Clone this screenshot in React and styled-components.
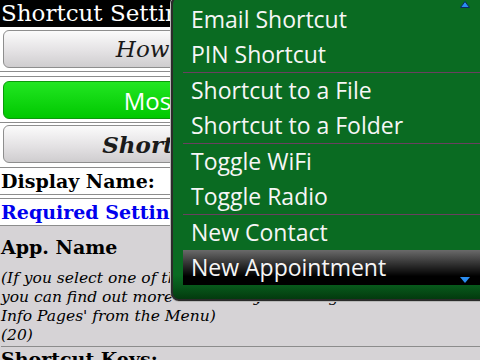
import React from 'react'
import styled, { createGlobalStyle } from 'styled-components';

const GlobalStyle = createGlobalStyle`
  html, body {
    margin: 0;
    padding: 0;
    background: #d6d3d6;
  }
`;

const Screen = styled.div`
  position: relative;
  width: 480px;
  height: 360px;
  overflow: hidden;
  background: #d6d3d6;
  font-family: "DejaVu Serif", serif;
`;

const TitleBar = styled.div`
  height: 27px;
  line-height: 27px;
  background: #000;
  color: #fff;
  font-size: 23px;
  padding-left: 1px;
  white-space: nowrap;
`;

const Upper = styled.div`
  background: #fff;
`;

const Block = styled.div`
  padding: ${({ $pad }) => $pad || '3px 3px 3px'};
  border-top: ${({ $ruleTop }) => ($ruleTop ? '1px solid #8c8c8c' : 'none')};
  border-bottom: 1px solid #8c8c8c;
  margin-top: ${({ $gap }) => $gap || 0};
`;

const Button = styled.div`
  height: 36px;
  border-radius: 6px;
  display: flex;
  align-items: center;
  justify-content: center;
  white-space: nowrap;
  overflow: hidden;
  border: 1px solid ${({ $green }) => ($green ? '#0a9a0a' : '#8e8e8e')};
  background: ${({ $green }) =>
    $green
      ? 'linear-gradient(#22e622, #00c800)'
      : 'linear-gradient(#fbfbfb, #e4e2e4 55%, #cfcdcf)'};
  color: ${({ $green }) => ($green ? '#fff' : '#1a1a1a')};
  font-family: ${({ $green }) => ($green ? '"Open Sans", sans-serif' : '"DejaVu Serif", serif')};
  font-size: ${({ $green }) => ($green ? '24px' : '23px')};
  font-style: ${({ $green }) => ($green ? 'normal' : 'italic')};
  font-weight: ${({ $bold }) => ($bold ? 700 : 400)};
`;

const Label = styled.div`
  font-weight: 700;
  font-size: 19px;
  color: ${({ $blue }) => ($blue ? '#0000ee' : '#000')};
  padding: 0 0 0 1px;
  height: 26px;
  line-height: 26px;
  white-space: nowrap;
  border-bottom: 1px solid #8c8c8c;
  border-top: ${({ $ruleTop }) => ($ruleTop ? '1px solid #8c8c8c' : 'none')};
  margin-top: ${({ $gap }) => $gap || 0};
`;

const Lower = styled.div`
  padding: 9px 0 0 1px;
`;

const FieldName = styled.div`
  font-weight: 700;
  font-size: 19px;
  line-height: 24px;
  white-space: nowrap;
`;

const Note = styled.div`
  font-style: italic;
  font-size: 15.5px;
  line-height: 19px;
  white-space: nowrap;
  padding-bottom: 1px;
  border-bottom: 1px solid #8c8c8c;
  margin-top: 10px;
`;

const Menu = styled.div`
  position: absolute;
  top: -4px;
  left: 171px;
  right: -10px;
  height: 305px;
  box-sizing: border-box;
  padding: 4px 0 0 10px;
  background: linear-gradient(#0a6b22 92%, #07561a 96%, #033a0e);
  border: 2px solid #2b2b2b;
  border-radius: 8px;
  box-shadow: 0 0 0 1px #b8b8b8;
  font-family: "Open Sans", "Noto Sans", sans-serif;
`;

const Item = styled.div`
  height: 35px;
  line-height: 35px;
  padding-left: 8px;
  font-size: 23px;
  color: #f6f6f6;
  white-space: nowrap;
  background: ${({ $active }) =>
    $active ? 'linear-gradient(#6a6a6a, #2a2a2a 45%, #000 75%)' : 'transparent'};
`;

const Separator = styled.div`
  height: 1px;
  background: #6a4060;
`;

const Arrow = styled.svg`
  position: absolute;
  right: ${({ $right }) => $right}px;
  top: ${({ $top }) => $top}px;
`;

const items = [
  ['Email Shortcut', 'PIN Shortcut'],
  ['Shortcut to a File', 'Shortcut to a Folder'],
  ['Toggle WiFi', 'Toggle Radio'],
  ['New Contact', 'New Appointment'],
];

const App = () => {
  return (
    <Screen>
      <GlobalStyle />
      <TitleBar>Shortcut Settings</TitleBar>
      <Upper>
        <Block>
          <Button>How to use shortcuts</Button>
        </Block>
        <Block $ruleTop $gap="4px" $pad="4px 3px 3px">
          <Button $green>Most Used Shortcuts</Button>
        </Block>
        <Block $pad="2px 3px 4px">
          <Button $bold>Shortcut Setting Info</Button>
        </Block>
        <Label>Display Name:</Label>
        <Label $blue $ruleTop $gap="3px">Required Settings</Label>
      </Upper>
      <Lower>
        <FieldName>App. Name</FieldName>
        <Note>
          (If you select one of the predefined shortcuts above,<br />
          you can find out more about it by selecting 'Show the Shortcut<br />
          Info Pages' from the Menu)<br />
          (20)
        </Note>
        <FieldName>Shortcut Keys:</FieldName>
      </Lower>
      <Menu>
        {items.map((group, gi) => (
          <React.Fragment key={gi}>
            {gi > 0 && <Separator />}
            {group.map((label) => (
              <Item key={label} $active={label === 'New Appointment'}>{label}</Item>
            ))}
          </React.Fragment>
        ))}
        <Arrow $right={18} $top={3} width="10" height="7" viewBox="0 0 10 7">
          <polygon points="5,0.5 9.5,6.5 0.5,6.5" fill="#2a8cf0" stroke="#0a2a60" strokeWidth="1" />
        </Arrow>
        <Arrow $right={18} $top={279} width="10" height="6" viewBox="0 0 10 6">
          <polygon points="0,0 10,0 5,6" fill="#2a8cf0" />
        </Arrow>
      </Menu>
    </Screen>
  )
}

export default App;
